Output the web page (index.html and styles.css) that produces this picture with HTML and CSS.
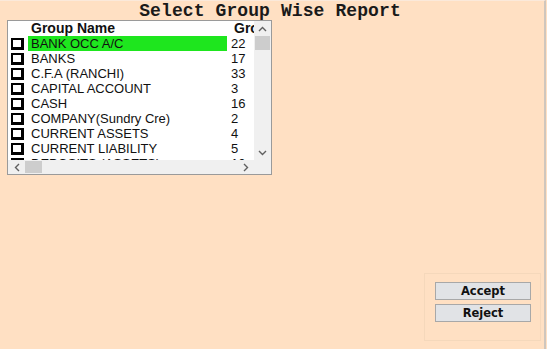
FILE: index.html
```html
<!DOCTYPE html>
<html lang="en">
<head>
    <meta charset="UTF-8">
    <title>Select Group Wise Report</title>
    <link rel="stylesheet" href="styles.css">
</head>
<body>
<div class="frame">
    <h1 class="title">Select Group Wise Report</h1>

    <div class="listbox">
        <div class="list-main">
            <div class="list-content">
                <div class="row head">
                    <span></span>
                    <span class="name">Group Name</span>
                    <span class="num">Group</span>
                </div>
                <div class="row">
                    <span class="check"></span>
                    <span class="name selected">BANK OCC A/C</span>
                    <span class="num">22</span>
                </div>
                <div class="row">
                    <span class="check"></span>
                    <span class="name">BANKS</span>
                    <span class="num">17</span>
                </div>
                <div class="row">
                    <span class="check"></span>
                    <span class="name">C.F.A (RANCHI)</span>
                    <span class="num">33</span>
                </div>
                <div class="row">
                    <span class="check"></span>
                    <span class="name">CAPITAL ACCOUNT</span>
                    <span class="num">3</span>
                </div>
                <div class="row">
                    <span class="check"></span>
                    <span class="name">CASH</span>
                    <span class="num">16</span>
                </div>
                <div class="row">
                    <span class="check"></span>
                    <span class="name">COMPANY(Sundry Cre)</span>
                    <span class="num">2</span>
                </div>
                <div class="row">
                    <span class="check"></span>
                    <span class="name">CURRENT ASSETS</span>
                    <span class="num">4</span>
                </div>
                <div class="row">
                    <span class="check"></span>
                    <span class="name">CURRENT LIABILITY</span>
                    <span class="num">5</span>
                </div>
                <div class="row">
                    <span class="check"></span>
                    <span class="name">DEPOSITS (ASSETS)</span>
                    <span class="num">10</span>
                </div>
            </div>
            <div class="vscroll">
                <div class="sbtn">
                    <svg width="9" height="6" viewBox="0 0 9 6"><path d="M1 5 L4.5 1.5 L8 5" fill="none" stroke="#606060" stroke-width="1.4"/></svg>
                </div>
                <div class="vthumb"></div>
                <div class="vtrack"></div>
                <div class="sbtn">
                    <svg width="9" height="6" viewBox="0 0 9 6"><path d="M1 1 L4.5 4.5 L8 1" fill="none" stroke="#606060" stroke-width="1.4"/></svg>
                </div>
            </div>
        </div>
        <div class="hscroll">
            <div class="hbtn">
                <svg width="6" height="9" viewBox="0 0 6 9"><path d="M5 1 L1.5 4.5 L5 8" fill="none" stroke="#606060" stroke-width="1.4"/></svg>
            </div>
            <div class="hthumb"></div>
            <div class="htrack"></div>
            <div class="hbtn">
                <svg width="6" height="9" viewBox="0 0 6 9"><path d="M1 1 L4.5 4.5 L1 8" fill="none" stroke="#606060" stroke-width="1.4"/></svg>
            </div>
            <div class="corner"></div>
        </div>
    </div>

    <div class="actions">
        <button class="btn">Accept</button>
        <button class="btn">Reject</button>
    </div>
</div>
</body>
</html>
```

FILE: styles.css
```css
body {
    margin: 0;
    background-color: #ffe0c3;
    font-family: "Liberation Sans", Arial, sans-serif;
}
.frame {
    width: 546px;
    height: 349px;
    box-sizing: border-box;
    border-right: 2px solid #cfc6bd;
    border-top: 1px solid #fbe9da;
    display: flex;
    flex-direction: column;
}
.title {
    margin: 0;
    height: 19px;
    line-height: 20px;
    text-align: center;
    font-family: "Liberation Mono", "Courier New", monospace;
    font-size: 18px;
    font-weight: bold;
    color: #1a1a1a;
    padding-right: 4px;
    letter-spacing: 0.1px;
}
.listbox {
    margin-left: 7px;
    width: 265px;
    height: 155px;
    box-sizing: border-box;
    border: 1px solid #9a9a9a;
    background: #fff;
    display: flex;
    flex-direction: column;
}
.list-main {
    display: flex;
    height: 139px;
}
.list-content {
    width: 246px;
    overflow: hidden;
}
.row {
    display: grid;
    grid-template-columns: 20px 199px 40px;
    height: 15px;
    font-size: 13px;
    line-height: 15px;
    color: #111;
    white-space: nowrap;
}
.row .name {
    padding-left: 3px;
}
.row .num {
    padding-left: 4px;
}
.head {
    font-weight: bold;
    font-size: 14px;
}
.head .num {
    padding-left: 7px;
}
.check {
    margin: 2px 0 0 3px;
    width: 13px;
    height: 12px;
    box-sizing: border-box;
    border: 2px solid #000;
    border-right-width: 3px;
    border-bottom-width: 3px;
    background: #fff;
}
.selected {
    background: #1ee61e;
}
.vscroll {
    width: 17px;
    background: #f0f0f0;
    display: flex;
    flex-direction: column;
}
.sbtn {
    height: 15px;
    display: flex;
    align-items: center;
    justify-content: center;
}
.vthumb {
    height: 14px;
    margin: 0 1px;
    background: #cdcdcd;
}
.vtrack {
    flex: 1;
}
.hscroll {
    height: 14px;
    display: flex;
    background: #f0f0f0;
}
.hbtn {
    width: 17px;
    display: flex;
    align-items: center;
    justify-content: center;
}
.hthumb {
    width: 17px;
    margin: 1px 0;
    background: #cdcdcd;
}
.htrack {
    flex: 1;
}
.corner {
    width: 17px;
    background: #f0f0f0;
}
.actions {
    margin: auto 3px 8px auto;
    width: 117px;
    height: 68px;
    box-sizing: border-box;
    border: 1px solid #f5d8bb;
    padding: 8px 0 0 10px;
    display: flex;
    flex-direction: column;
    gap: 4px;
}
.btn {
    width: 96px;
    height: 18px;
    padding: 0;
    border: 1px solid #a8a8a8;
    background: #e1e3e6;
    font-family: "DejaVu Sans", Verdana, sans-serif;
    font-weight: bold;
    font-size: 11.5px;
    color: #111;
}
```
